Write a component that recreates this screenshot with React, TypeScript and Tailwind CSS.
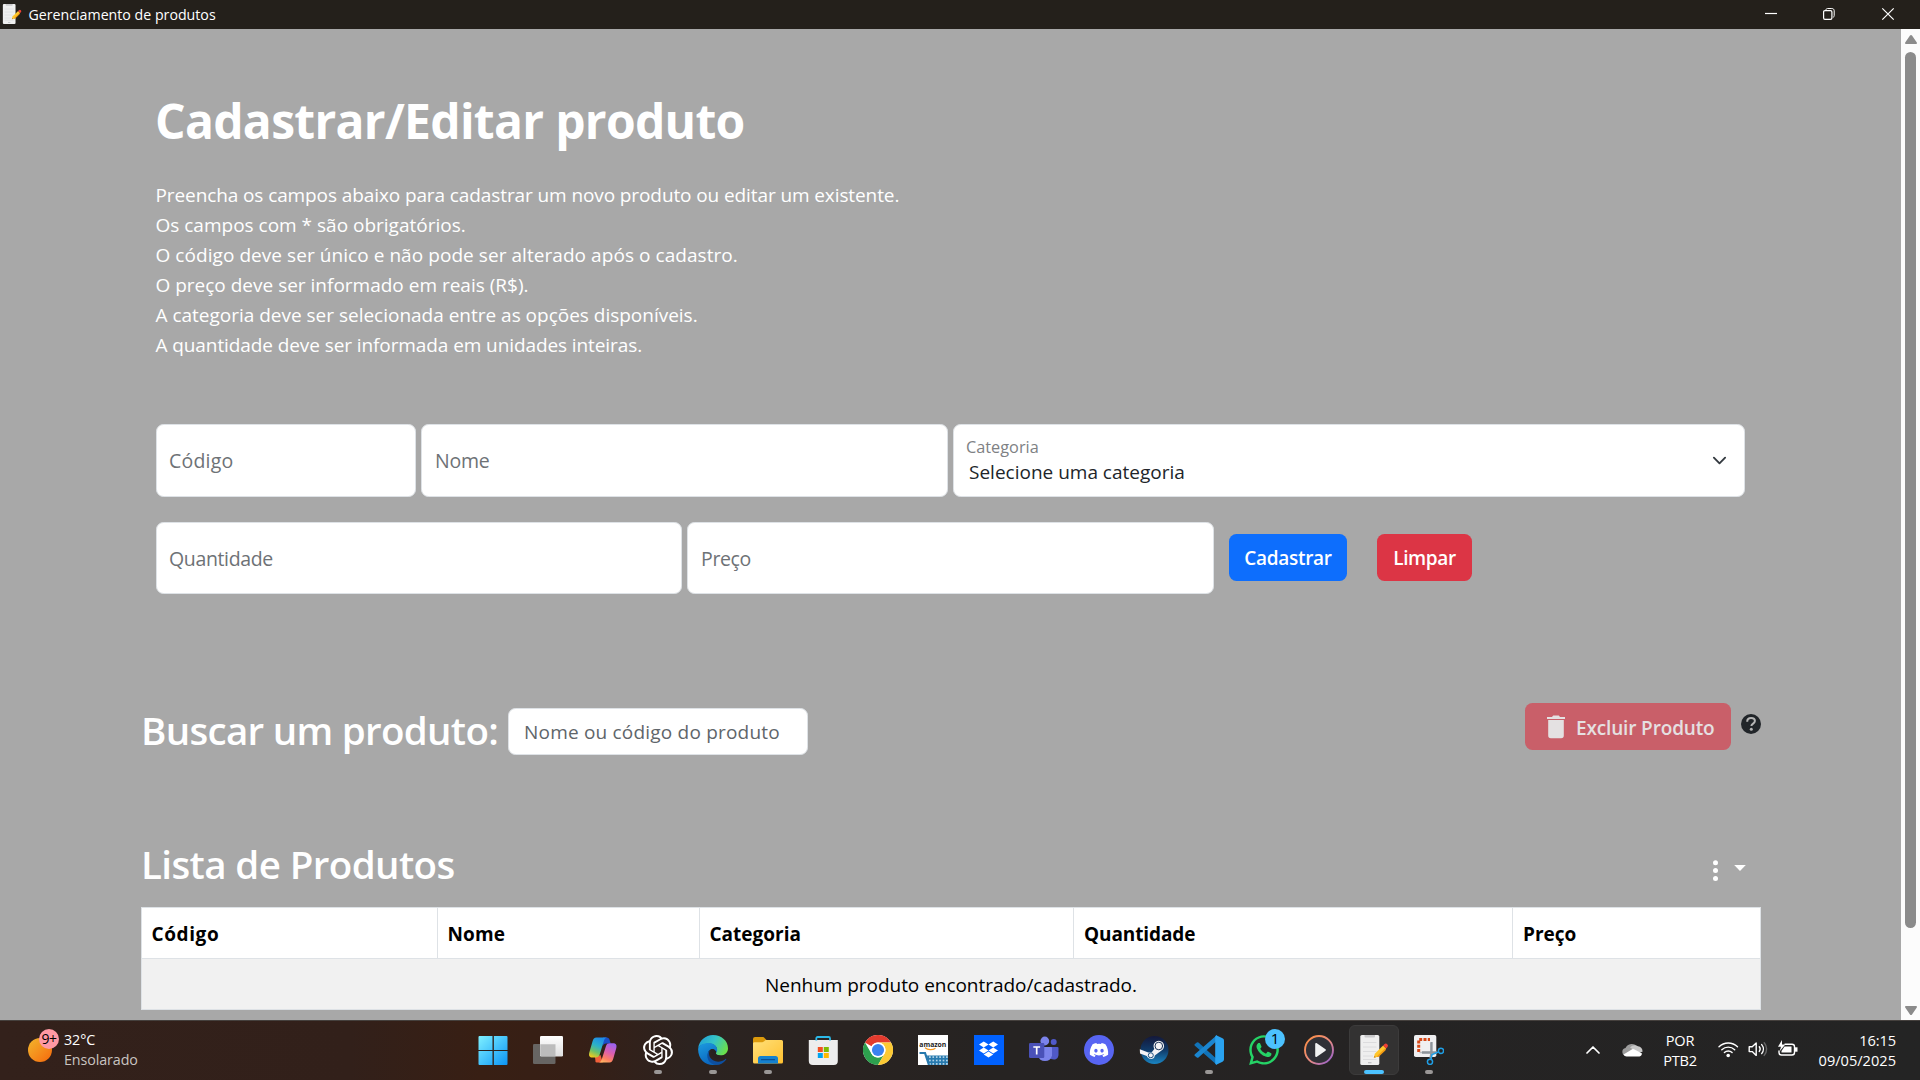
import React from "react";
import { SiOpenai } from "react-icons/si";
import { FaDiscord, FaDropbox, FaWhatsapp } from "react-icons/fa";

function NotesIcon({ className }: { className?: string }) {
  return (
    <svg viewBox="0 0 30 30" className={className}>
      <rect x="1.3" y="0" width="19" height="30" rx="1.6" fill="#efefef" />
      <path d="M5.5 0h10.5v1.6a1 1 0 0 1-1 1H6.500a1 1 0 0 1-1-1z" fill="#c9c9cb" />
      <path d="M4 7.500h13.500M4 12h13.500M4 16.500h13.500M4 21h10M4 24.500h13.500" stroke="#dcdcde" strokeWidth="1" />
      <path d="M9 27.700h3.500" stroke="#bdbdbf" strokeWidth="1.200" />
      <path d="M14.800 22.800l1-4 8.300-8.300 3 3-8.300 8.300z" fill="#ffc62b" />
      <path d="M17.500 21.700l8.300-8.300 1.300 1.300-7.600 7.400z" fill="#f59b12" />
      <path d="M24.100 10.500l1.200-1.200a2.100 2.100 0 0 1 3 3l-1.200 1.200z" fill="#ee4035" />
      <path d="M14.800 22.800l.6-2 1.600 1.400z" fill="#c98a2c" />
    </svg>
  );
}

function WindowsIcon() {
  return (
    <svg viewBox="0 0 30 30" className="size-[30px]">
      <defs>
        <linearGradient id="win" x1="0" y1="0" x2="1" y2="1">
          <stop offset="0" stopColor="#7ff0ff" />
          <stop offset=".5" stopColor="#45c3fb" />
          <stop offset="1" stopColor="#0c94f5" />
        </linearGradient>
      </defs>
      <path fill="url(#win)" d="M1.500 1h13.700v14H.5V2a1 1 0 0 1 1-1zM15.900 1h12.600a1 1 0 0 1 1 1v13H15.900zM.5 16h14.700v14H1.500a1 1 0 0 1-1-1zM15.900 16h13.600v13a1 1 0 0 1-1 1H15.900z" />
      <path d="M15 1v29M.5 15.500h29" stroke="#2b211d" strokeWidth="1" />
    </svg>
  );
}

function TaskViewIcon() {
  return (
    <svg viewBox="0 0 30 30" className="size-[30px]">
      <defs>
        <linearGradient id="tv" x1="0" y1="0" x2="0" y2="1">
          <stop offset="0" stopColor="#fff" />
          <stop offset="1" stopColor="#dedede" />
        </linearGradient>
      </defs>
      <rect x="0" y="9" width="22.500" height="20" rx="1.300" fill="#676563" />
      <rect x="7" y="1" width="23" height="20.500" rx="1.300" fill="url(#tv)" />
      <path d="M7.300 9.200H22.500V21H8.300a1 1 0 0 1-1-1z" fill="#bcbcbc" />
    </svg>
  );
}

function CopilotIcon() {
  return (
    <svg viewBox="0 0 30 30" className="size-[30px]">
      <defs>
        <linearGradient id="cpA" x1=".6" y1="0" x2=".2" y2="1">
          <stop offset="0" stopColor="#1e8be8" />
          <stop offset=".4" stopColor="#2cb1c9" />
          <stop offset=".7" stopColor="#6cc26a" />
          <stop offset="1" stopColor="#f2cb1d" />
        </linearGradient>
        <linearGradient id="cpB" x1=".7" y1="0" x2=".3" y2="1">
          <stop offset="0" stopColor="#9b63f0" />
          <stop offset=".45" stopColor="#dd5fae" />
          <stop offset=".8" stopColor="#ff8061" />
          <stop offset="1" stopColor="#ffb464" />
        </linearGradient>
      </defs>
      <path d="M15 2.500h3.500c2 0 2.700 1.100 3.200 2.700l1 3.300h-4.500c-2 0-3 1.200-3.600 3z" fill="#1a4fc8" />
      <path d="M7.500 26.500c-.5.900 1 1 2 1h5.300l-2.300-7.500-5.500 2z" fill="#f2603a" />
      <path d="M8.500 2.500H19c-1.700.3-2.500 1.500-3 3l-4.300 14c-.7 2-2 3-4 3H4C1.200 22.500.6 20 1.300 17.500L4.500 6.500C5.200 4 6.300 2.500 8.500 2.500z" fill="url(#cpA)" />
      <path d="M21.500 27.500H10.500c1.900-.2 2.700-1.400 3.200-3L18 11c.7-2 1.800-2.700 3.500-2.700h3.800c2.800 0 3.700 2.200 3 4.700l-3 10.500c-.8 2.500-1.700 4-3.800 4z" fill="url(#cpB)" />
    </svg>
  );
}

function EdgeIcon() {
  return (
    <svg viewBox="0 0 30 30" className="size-[30px]">
      <defs>
        <linearGradient id="edA" x1="0" y1=".2" x2="1" y2=".6">
          <stop offset="0" stopColor="#1f9fd8" />
          <stop offset=".5" stopColor="#36c4c6" />
          <stop offset="1" stopColor="#6be04a" />
        </linearGradient>
        <linearGradient id="edB" x1="0" y1="0" x2=".4" y2="1">
          <stop offset="0" stopColor="#1c9be0" />
          <stop offset="1" stopColor="#0b68c0" />
        </linearGradient>
      </defs>
      <path d="M.2 13C1.200 5.500 7.500 0 15 0c8.500 0 15 6 15 13.200 0 4.600-3.400 7.300-7.400 7.300-3.200 0-5-.9-5-2 0-.8 1.400-1.400 1.400-3.700 0-3.300-3-6-7.500-6C6.500 8.800 2 10 .2 13z" fill="url(#edA)" />
      <path d="M.1 14C.4 10.300 5 8 10.500 8c5.300 0 8.700 3 8.700 6.800 0 1-.3 1.900-.8 2.600C17.500 15 15 13.300 12.500 14.500 9 16 9.500 22 13.500 26c1.500 1.500 3.700 3 5.500 3.300C10.500 32 0 26 .1 14z" fill="url(#edB)" />
      <path d="M12 15c-2 3-1.200 7.800 3 10.300 4 2.400 9 1.500 12.500-1.300.6-.4 1 .1.600.7C24 30.500 17.500 31 13.500 28.500 9 25.700 7.500 18.500 12 15z" fill="#0d4fa0" />
      <path d="M18.200 17.800c-.6.700 0 1.500 1 2 2.800 1.300 6.300.8 8.500-.8l-.7 2.500c-2 2-6 2.700-9.200 1.400-3-1.300-5-4.500-4.100-7.500.7-2 3.700-1.200 4.500 2.400z" fill="#282220" />
    </svg>
  );
}

function ExplorerIcon() {
  return (
    <svg viewBox="0 0 30 30" className="size-[30px]">
      <defs>
        <linearGradient id="fo" x1="0" y1="0" x2="1" y2="1">
          <stop offset="0" stopColor="#ffe07a" />
          <stop offset="1" stopColor="#ffc02f" />
        </linearGradient>
      </defs>
      <path d="M0 4a2 2 0 0 1 2-2h7.500c1 0 1.500.3 2 .9L13.500 5H28v8H0z" fill="#dc9a0c" />
      <path d="M0 8.500a1.500 1.500 0 0 1 1.500-1.300h7c1.500 0 2-.3 3-1.200.6-.6 1-.9 2-.9h15a1.500 1.500 0 0 1 1.500 1.500v20.400a1.500 1.500 0 0 1-1.500 1.500h-27A1.500 1.500 0 0 1 0 27z" fill="url(#fo)" />
      <path d="M5 28.500V23.500a2.500 2.500 0 0 1 2.500-2.500h15a2.500 2.500 0 0 1 2.500 2.500v5z" fill="#1581cf" />
      <path d="M8.500 24.700h13" stroke="#0c4f94" strokeWidth="1.200" strokeLinecap="round" />
    </svg>
  );
}

function StoreIcon() {
  return (
    <svg viewBox="0 0 30 30" className="size-[30px]">
      <path d="M.8 5h29v21a4 4 0 0 1-4 4h-21a4 4 0 0 1-4-4z" fill="#ededed" />
      <path d="M8.300 5.500V3.300A1.300 1.300 0 0 1 9.600 2h11.100A1.300 1.300 0 0 1 22 3.300v2.200" fill="none" stroke="#2cb9e8" strokeWidth="1.800" />
      <rect x="9.800" y="12" width="5" height="5" fill="#f25022" />
      <rect x="15.800" y="12" width="5" height="5" fill="#7fba00" />
      <rect x="9.800" y="18" width="5" height="5" fill="#00a4ef" />
      <rect x="15.800" y="18" width="5" height="5" fill="#ffb900" />
    </svg>
  );
}

function ChromeIcon() {
  return (
    <svg viewBox="0 0 48 48" className="size-[30px]">
      <circle cx="24" cy="24" r="24" fill="#fff" />
      <path d="M3.200 12A24 24 0 0 1 44.800 12H24a12 12 0 0 0-10.400 6z" fill="#e33b2e" />
      <path d="M3.200 12A24 24 0 0 0 24 48l10.400-18A12 12 0 0 1 13.600 30z" fill="#2da04e" />
      <path d="M44.800 12A24 24 0 0 1 24 48l10.400-18A12 12 0 0 0 34.400 18 12 12 0 0 0 24 12z" fill="#fcc934" />
      <circle cx="24" cy="24" r="12" fill="#fff" />
      <circle cx="24" cy="24" r="9.700" fill="#3a82f0" />
    </svg>
  );
}

function AmazonIcon() {
  return (
    <svg viewBox="0 0 30 30" className="size-[30px]">
      <defs>
        <pattern id="mesh" width="3.400" height="3.400" patternUnits="userSpaceOnUse">
          <rect width="3.400" height="3.400" fill="#2679ae" />
          <circle cx="1.700" cy="1.700" r=".9" fill="#cfe6f4" />
        </pattern>
      </defs>
      <rect width="30" height="30" fill="#fff" />
      <text x="1.300" y="11.600" textLength="27" lengthAdjust="spacingAndGlyphs" fontSize="7.500" fontWeight="700" fontFamily="Open Sans, sans-serif" fill="#1c1c1c">amazon</text>
      <path d="M7 12.700c3 2.500 7.500 2.500 10.500.5" stroke="#f59a23" strokeWidth="1.200" fill="none" />
      <path d="M8 20.500h22V30H11z" fill="url(#mesh)" />
      <path d="M1.500 18h5.500l4 12" fill="none" stroke="#2679ae" strokeWidth="2.200" />
    </svg>
  );
}

function TeamsIcon() {
  return (
    <svg viewBox="0 0 30 30" className="size-[30px]">
      <circle cx="24.700" cy="7" r="3" fill="#5059c9" />
      <path d="M21 12h7.500a1 1 0 0 1 1 1v6.500c0 3-2 5-4.500 5s-4-1-4-1z" fill="#5059c9" />
      <circle cx="15.800" cy="6" r="4.400" fill="#7b83eb" />
      <path d="M10 12h12a1 1 0 0 1 1 1v7.500a7.200 7.200 0 0 1-14 0z" fill="#7b83eb" />
      <rect x="0" y="8" width="15.300" height="15" rx="1.300" fill="#4a51b8" />
      <path d="M4.300 12h6.800M7.700 12v7.500" stroke="#fff" strokeWidth="1.700" />
    </svg>
  );
}

function SteamIcon() {
  return (
    <svg viewBox="0 0 30 30" className="size-[30px]">
      <defs>
        <linearGradient id="st" x1="0" y1="0" x2="0" y2="1">
          <stop offset="0" stopColor="#14183a" />
          <stop offset=".5" stopColor="#103a68" />
          <stop offset="1" stopColor="#1a86c4" />
        </linearGradient>
      </defs>
      <circle cx="15.500" cy="15" r="14" fill="url(#st)" />
      <path d="M.8 14.200l8.500 3.300 3.500-.3 4-5.200 5 4-6 4.500c-.3 3-2.500 3.800-4.300 3.500-2-.3-3.200-1.700-3.700-3L1 18.500z" fill="#f3f3f5" />
      <circle cx="19.800" cy="11" r="5.300" fill="#f3f3f5" />
      <circle cx="19.800" cy="11" r="3.800" fill="none" stroke="#1b3457" strokeWidth="1" />
      <circle cx="11.800" cy="20.300" r="2.500" fill="none" stroke="#1b4f80" strokeWidth="1" />
    </svg>
  );
}

function CodeIcon() {
  return (
    <svg viewBox="0 0 30 30" className="size-[30px]">
      <path d="M1.300 8.700L2.800 7.500a1.300 1.300 0 0 1 1.700.1L23 24.300V30L.9 10.700a1.300 1.300 0 0 1 .4-2z" fill="#1173b8" />
      <path d="M1.300 21.300l1.500 1.200a1.300 1.300 0 0 0 1.700-.1L23 5.700V0L.9 19.300a1.300 1.300 0 0 0 .4 2z" fill="#1b86d0" />
      <path d="M22.200.2L28.500 3.200A2.500 2.500 0 0 1 30 5.400v19.200a2.500 2.500 0 0 1-1.500 2.200l-6.300 3c-.7-.4-1-1-1-1.800V2c0-.8.300-1.400 1-1.800z" fill="#2aa3f0" />
    </svg>
  );
}

function MediaIcon() {
  return (
    <svg viewBox="0 0 30 30" className="size-[30px]">
      <defs>
        <linearGradient id="md" x1="0" y1="0" x2="1" y2="1">
          <stop offset="0" stopColor="#ff8f3c" />
          <stop offset=".55" stopColor="#e58a86" />
          <stop offset="1" stopColor="#8a5ad8" />
        </linearGradient>
      </defs>
      <circle cx="15" cy="15" r="14" fill="#303036" stroke="url(#md)" strokeWidth="1.900" />
      <path d="M11.200 8.900v12.200c0 .8.700 1.200 1.300.8l9-6.200c.5-.3.500-1 0-1.400l-9-6.200c-.6-.4-1.300 0-1.300.8z" fill="#f1f1f1" />
    </svg>
  );
}

function SnipIcon() {
  return (
    <svg viewBox="0 0 30 30" className="size-[30px]">
      <rect x="0" y="0" width="22.300" height="22" rx="1.800" fill="#f0f0f2" />
      <path d="M4.700 17V4.600H16" fill="none" stroke="#d64817" strokeWidth="3" strokeDasharray="3 1.300" />
      <path d="M17 8v9.500H5.500" fill="none" stroke="#b9bcc0" strokeWidth="1.500" />
      <path d="M17.500 7v10.500l-1 6M8 17.500h15" stroke="#8e959c" strokeWidth="2.300" fill="none" />
      <circle cx="16" cy="26.800" r="2.600" fill="none" stroke="#1f9fe6" strokeWidth="1.500" />
      <circle cx="27" cy="15.800" r="2.600" fill="none" stroke="#1f9fe6" strokeWidth="1.500" />
      <path d="M24.500 17l-6.500 2.500-1 5" stroke="#1f9fe6" strokeWidth="1.500" fill="none" />
    </svg>
  );
}

const apps: { name: string; icon: React.ReactNode; open?: boolean; active?: boolean }[] = [
  { name: "start", icon: <WindowsIcon /> },
  { name: "taskview", icon: <TaskViewIcon /> },
  { name: "copilot", icon: <CopilotIcon /> },
  { name: "gpt", icon: <SiOpenai className="size-[30px] text-white" />, open: true },
  { name: "edge", icon: <EdgeIcon />, open: true },
  { name: "explorer", icon: <ExplorerIcon />, open: true },
  { name: "store", icon: <StoreIcon /> },
  { name: "chrome", icon: <ChromeIcon /> },
  { name: "amazon", icon: <AmazonIcon /> },
  {
    name: "dropbox",
    icon: (
      <span className="flex size-[30px] items-center justify-center bg-[#0061ff]">
        <FaDropbox className="size-[19px] text-white" />
      </span>
    ),
  },
  { name: "teams", icon: <TeamsIcon /> },
  {
    name: "discord",
    icon: (
      <span className="flex size-[30px] items-center justify-center rounded-full bg-[#5865f2]">
        <FaDiscord className="size-[20px] text-white" />
      </span>
    ),
  },
  { name: "steam", icon: <SteamIcon /> },
  { name: "code", icon: <CodeIcon />, open: true },
  {
    name: "whatsapp",
    icon: (
      <span className="relative">
        <FaWhatsapp className="size-[34px] -m-[2px] text-[#25d366]" />
        <span className="absolute -top-[6px] left-[16px] flex size-5 items-center justify-center rounded-full bg-[#4cc2ff] text-[15px] leading-none text-black">
          1
        </span>
      </span>
    ),
  },
  { name: "media", icon: <MediaIcon /> },
  { name: "notes", icon: <NotesIcon className="size-[30px]" />, active: true },
  { name: "snip", icon: <SnipIcon />, open: true },
];

function TitleBar() {
  return (
    <header className="flex h-[29px] shrink-0 items-center bg-[#24201b] text-white">
      <NotesIcon className="mb-px ml-[2px] size-5" />
      <span className="ml-[6.5px] text-[14.2px] leading-[29px]">Gerenciamento de produtos</span>
      <svg viewBox="0 0 130 14" className="mr-[25px] mb-px ml-auto h-[14px] w-[130px]" fill="none" stroke="#fff" strokeWidth="1">
        <path d="M0 6.500h12" strokeWidth="1.200" />
        <rect x="58.600" y="3.600" width="8.300" height="8.800" rx="1.300" strokeWidth="1.200" />
        <path d="M61 3V2.800c0-.8.700-1.300 1.500-1.300h4.300c1.500 0 2.400.9 2.400 2.300v4.900c0 .8-.5 1.500-1.200 1.500" />
        <path d="M117.300 1.300l11.400 11.400M128.700 1.300l-11.400 11.400" strokeWidth="1.200" />
      </svg>
    </header>
  );
}

function Field({ label, className, textClass }: { label: string; className: string; textClass: string }) {
  return (
    <div className={`flex items-center rounded-[7.5px] border border-[#dee2e6] bg-white ${className}`}>
      <span className={`text-[19.5px] text-[#6e7276] ${textClass}`}>{label}</span>
    </div>
  );
}

function ProductForm() {
  return (
    <section className="px-[15px] pt-[62px]">
      <h1 className="-ml-[1px] text-[48px] leading-[60px] font-bold tracking-[-0.7px] text-white">Cadastrar/Editar produto</h1>
      <div className="mt-[29px] -ml-[0.5px] text-[19px] leading-[30px] text-white">
        <p className="tracking-[-0.1px]">Preencha os campos abaixo para cadastrar um novo produto ou editar um existente.</p>
        <p>Os campos com * são obrigatórios.</p>
        <p className="tracking-[0.06px]">O código deve ser único e não pode ser alterado após o cadastro.</p>
        <p>O preço deve ser informado em reais (R$).</p>
        <p className="tracking-[-0.01px]">A categoria deve ser selecionada entre as opções disponíveis.</p>
        <p className="tracking-[-0.09px]">A quantidade deve ser informada em unidades inteiras.</p>
      </div>
      <div className="mt-16 flex h-[73px] gap-[5px]">
        <Field label="Código" className="w-[260px] pl-3" textClass="tracking-[0.2px]" />
        <Field label="Nome" className="w-[527px] pl-[13px]" textClass="tracking-[-0.2px]" />
        <div className="flex w-[792px] items-center rounded-[7.5px] border border-[#dee2e6] bg-white pr-[17px] pl-3">
          <div className="flex h-full flex-1 flex-col pt-3">
            <span className="text-[16.3px] leading-5 text-[#7e8184]">Categoria</span>
            <span className="mt-[3px] pl-[3px] text-[19px] leading-6 text-[#212529]">Selecione uma categoria</span>
          </div>
          <svg viewBox="0 0 16 16" className="size-[15px]" fill="none" stroke="#343a40" strokeWidth="2" strokeLinecap="round" strokeLinejoin="round">
            <path d="m2 5 6 6 6-6" />
          </svg>
        </div>
      </div>
      <div className="mt-[25px] flex h-[72px] items-center gap-[5px]">
        <Field label="Quantidade" className="h-full w-[526px] pt-[2px] pl-3" textClass="tracking-[-0.35px]" />
        <Field label="Preço" className="h-full w-[527px] pt-[2px] pl-[13px]" textClass="tracking-[-0.35px]" />
        <button className="mb-px ml-[10px] h-[47px] w-[118px] rounded-[7.5px] bg-[#0d6efd] pt-[2px] text-[19px] font-semibold tracking-[-0.3px] text-white">
          Cadastrar
        </button>
        <button className="mb-px ml-[25px] h-[47px] w-[95px] rounded-[7.5px] bg-[#dc3545] pt-[2px] text-[19px] font-semibold tracking-[-0.4px] text-white">
          Limpar
        </button>
      </div>
    </section>
  );
}

function SearchRow() {
  return (
    <section className="mt-[109px] flex h-[52px] items-start">
      <h2 className="mt-[3px] w-[366px] text-[38.5px] leading-[48px] font-semibold tracking-[-0.7px] whitespace-nowrap text-white">Buscar um produto:</h2>
      <div className="mt-[5px] ml-px flex h-[47px] w-[300px] items-center rounded-[7.5px] border border-[#dee2e6] bg-white pt-[2px] pl-[15px] text-[19px] tracking-[0.2px] text-[#60656a]">
        Nome ou código do produto
      </div>
      <button className="ml-auto flex h-[47px] w-[206px] items-center rounded-[7.5px] bg-[#c95f69] pl-[22px] text-[19px] font-semibold tracking-[-0.15px] text-[#e5e0e1]">
        <svg viewBox="0 0 18 24" className="mt-px h-[24px] w-[18px]" fill="#e4e1e2">
          <path d="M0 2h5l1.200-1.400h5.600L13 2h5v2H0zM1.200 5h15.600v15.600a2.600 2.600 0 0 1-2.600 2.600H3.800a2.600 2.600 0 0 1-2.600-2.600z" />
        </svg>
        <span className="mt-[3px] ml-[11px]">Excluir Produto</span>
      </button>
      <svg viewBox="0 0 20 20" className="mt-[11px] ml-[10px] size-5">
        <circle cx="10" cy="10" r="10" fill="#212529" />
        <path d="M6.200 7.700C6.200 5.400 7.800 4.100 10.100 4.100c2.400 0 3.800 1.200 3.800 3 0 2.600-3.500 2.500-3.500 5" fill="none" stroke="#b5b5b5" strokeWidth="2" />
        <circle cx="10.300" cy="15.200" r="1.500" fill="#b5b5b5" />
      </svg>
    </section>
  );
}

function ProductTable() {
  return (
    <section className="mt-[85px]">
      <div className="flex h-12 items-start">
        <h2 className="text-[38.5px] leading-[48px] font-semibold tracking-[-0.6px] text-white">Lista de Produtos</h2>
        <svg viewBox="0 0 34 22" className="mt-5 mr-[15px] ml-auto h-[22px] w-[34px]" fill="#fff">
          <circle cx="3.500" cy="2.700" r="2.500" />
          <circle cx="3.500" cy="10.500" r="2.500" />
          <circle cx="3.500" cy="18.400" r="2.500" />
          <path d="M22.200 4.900h11.600L28 11z" />
        </svg>
      </div>
      <div className="mt-[19px] border border-[#dee2e6] bg-white text-[19px] text-black">
        <div className="grid h-[51px] grid-cols-[296px_262px_374px_439px_1fr] divide-x divide-[#dee2e6] border-b border-[#dee2e6] font-bold">
          <span className="flex items-center pt-[3px] pl-[9.5px] tracking-[0.6px]">Código</span>
          <span className="flex items-center pt-[3px] pl-[9.5px] tracking-[0.1px]">Nome</span>
          <span className="flex items-center pt-[3px] pl-[9.5px]">Categoria</span>
          <span className="flex items-center pt-[3px] pl-[10px] tracking-[-0.1px]">Quantidade</span>
          <span className="flex items-center pt-[3px] pl-[10px]">Preço</span>
        </div>
        <div className="flex h-[50px] items-center justify-center bg-[#f1f1f1] pt-[3px] tracking-[-0.04px]">Nenhum produto encontrado/cadastrado.</div>
      </div>
    </section>
  );
}

function ScrollBar() {
  return (
    <div className="flex w-[19px] flex-col items-center bg-[#fcfcfc]">
      <svg viewBox="0 0 12 9" className="mt-[6px] h-[9px] w-3" fill="#8b8b8b">
        <path d="M6 0c.4 0 .8.300 1 .6l4.800 7c.4.700.1 1.400-.7 1.400H.9C.1 9-.2 8.300.2 7.600L5 .6c.2-.3.600-.6 1-.6z" />
      </svg>
      <div className="mt-[8px] h-[876px] w-[11px] rounded-full bg-[#8b8b8b]" />
      <svg viewBox="0 0 12 9" className="mt-auto mb-[5px] h-[9px] w-3" fill="#8b8b8b">
        <path d="M6 9c.4 0 .8-.3 1-.6l4.800-7C12.200.7 11.900 0 11.100 0H.9C.1 0-.2.7.2 1.400l4.800 7c.2.300.6.600 1 .6z" />
      </svg>
    </div>
  );
}

function TaskBar() {
  return (
    <footer className="flex h-[60px] shrink-0 items-stretch border-t border-[#45403d] bg-[linear-gradient(90deg,#33211b_0px,#32201a_350px,#381f14_480px,#361f16_580px,#2c2320_690px,#262322_1000px,#252323_1300px,#242424_1920px)] pb-[2px] text-white">
      <div className="flex w-[465px] items-center pl-7">
        <div className="relative size-6 rounded-full bg-linear-to-br from-[#f0b52c] to-[#f4660a]">
          <span className="absolute -top-[9px] left-[11px] flex size-5 items-center justify-center rounded-full bg-[#ff99a4] text-[14px] leading-none tracking-[-0.5px] text-black">9+</span>
        </div>
        <div className="ml-3 text-[14.3px] leading-5 tracking-[-0.1px]">
          <div className="text-white">32°C</div>
          <div className="text-[#c9c4c1]">Ensolarado</div>
        </div>
      </div>
      <nav className="flex">
        {apps.map((a) => (
          <div key={a.name} className="relative flex w-[55.12px] items-center justify-center">
            <div className={a.active ? "flex size-[50px] items-center justify-center rounded-md border border-[#3c3b3b] bg-[#333232]" : "flex size-[50px] items-center justify-center"}>{a.icon}</div>
            {a.open && <i className="absolute bottom-[4px] h-1 w-2 rounded-full bg-[#9a9796]" />}
            {a.active && <i className="absolute bottom-[4px] h-1 w-5 rounded-full bg-[#4cc2ff]" />}
          </div>
        ))}
      </nav>
      <div className="ml-auto flex items-center">
        <svg viewBox="0 0 14 8" className="mr-[-1px] h-2 w-[14px]" fill="none" stroke="#fff" strokeWidth="1.700" strokeLinecap="round" strokeLinejoin="round">
          <path d="M1 7l6-6 6 6" />
        </svg>
        <svg viewBox="0 0 21 14" className="ml-[23px] h-[14px] w-[21px]">
          <path d="M4.500 13a4 4 0 0 1-1-7.900A6.800 6.800 0 0 1 15.500 4l-8 5z" fill="#9c9c9c" />
          <path d="M8 4.500a6.300 6.300 0 0 1 8-1.200 5 5 0 0 1 4.500 5.500l-4 1z" fill="#c8c8c8" />
          <path d="M1.500 11.500L11 5.800l8.800 4.500A3 3 0 0 1 17.500 13.500h-13a4 4 0 0 1-3-2z" fill="#fff" />
        </svg>
        <div className="ml-5 w-[35px] text-center text-[14.6px] leading-5 tracking-[-0.2px]">
          <div>POR</div>
          <div>PTB2</div>
        </div>
        <svg viewBox="0 0 80 18" className="mr-px mb-px ml-5 h-[18px] w-20" fill="none" stroke="#fff" strokeLinecap="round" strokeLinejoin="round" strokeWidth="1.400">
          <path d="M1 6.700a13.300 13.300 0 0 1 18.500 0M3.800 9.700a9.300 9.300 0 0 1 12.900 0M6.400 12.600a5.500 5.500 0 0 1 7.700 0" />
          <circle cx="10.200" cy="15.500" r="1.800" fill="#fff" stroke="none" />
          <path d="M31.200 6.800h3l4-3.800v12.400l-4-3.800h-3z" />
          <path d="M41.300 6.800c1 1.300 1 3.300 0 4.600M43.700 4.600c2.200 2.600 2.200 6.400 0 9" />
          <path d="M46.200 2.800c3.200 3.600 3.200 9 0 12.600" stroke="#666" />
          <path d="M67 4.200h7a2.500 2.500 0 0 1 2.500 2.500v5.800A2.500 2.500 0 0 1 74 15H63.500a2.500 2.500 0 0 1-2.500-2.500V11" />
          <path d="M66.500 6.500h7V12.500h-10V11z" fill="#fff" stroke="none" />
          <path d="M77 7.300h2.500v4.400H77z" fill="#fff" stroke="none" />
          <path d="M64 0l-4 6.700h3l-1.300 4.500L67.300 4.500H64z" fill="#fff" stroke="none" />
        </svg>
        <div className="mr-6 ml-5 text-right text-[14.6px] leading-5">
          <div className="tracking-[-0.1px]">16:15</div>
          <div>09/05/2025</div>
        </div>
      </div>
    </footer>
  );
}

export default function App() {
  return (
    <div className="flex h-screen w-screen flex-col overflow-hidden bg-[#a8a8a8] font-['Open_Sans',sans-serif]">
      <TitleBar />
      <div className="flex min-h-0 flex-1">
        <main className="min-w-0 flex-1 pr-[140px] pl-[141px]">
          <ProductForm />
          <SearchRow />
          <ProductTable />
        </main>
        <ScrollBar />
      </div>
      <TaskBar />
    </div>
  );
}
